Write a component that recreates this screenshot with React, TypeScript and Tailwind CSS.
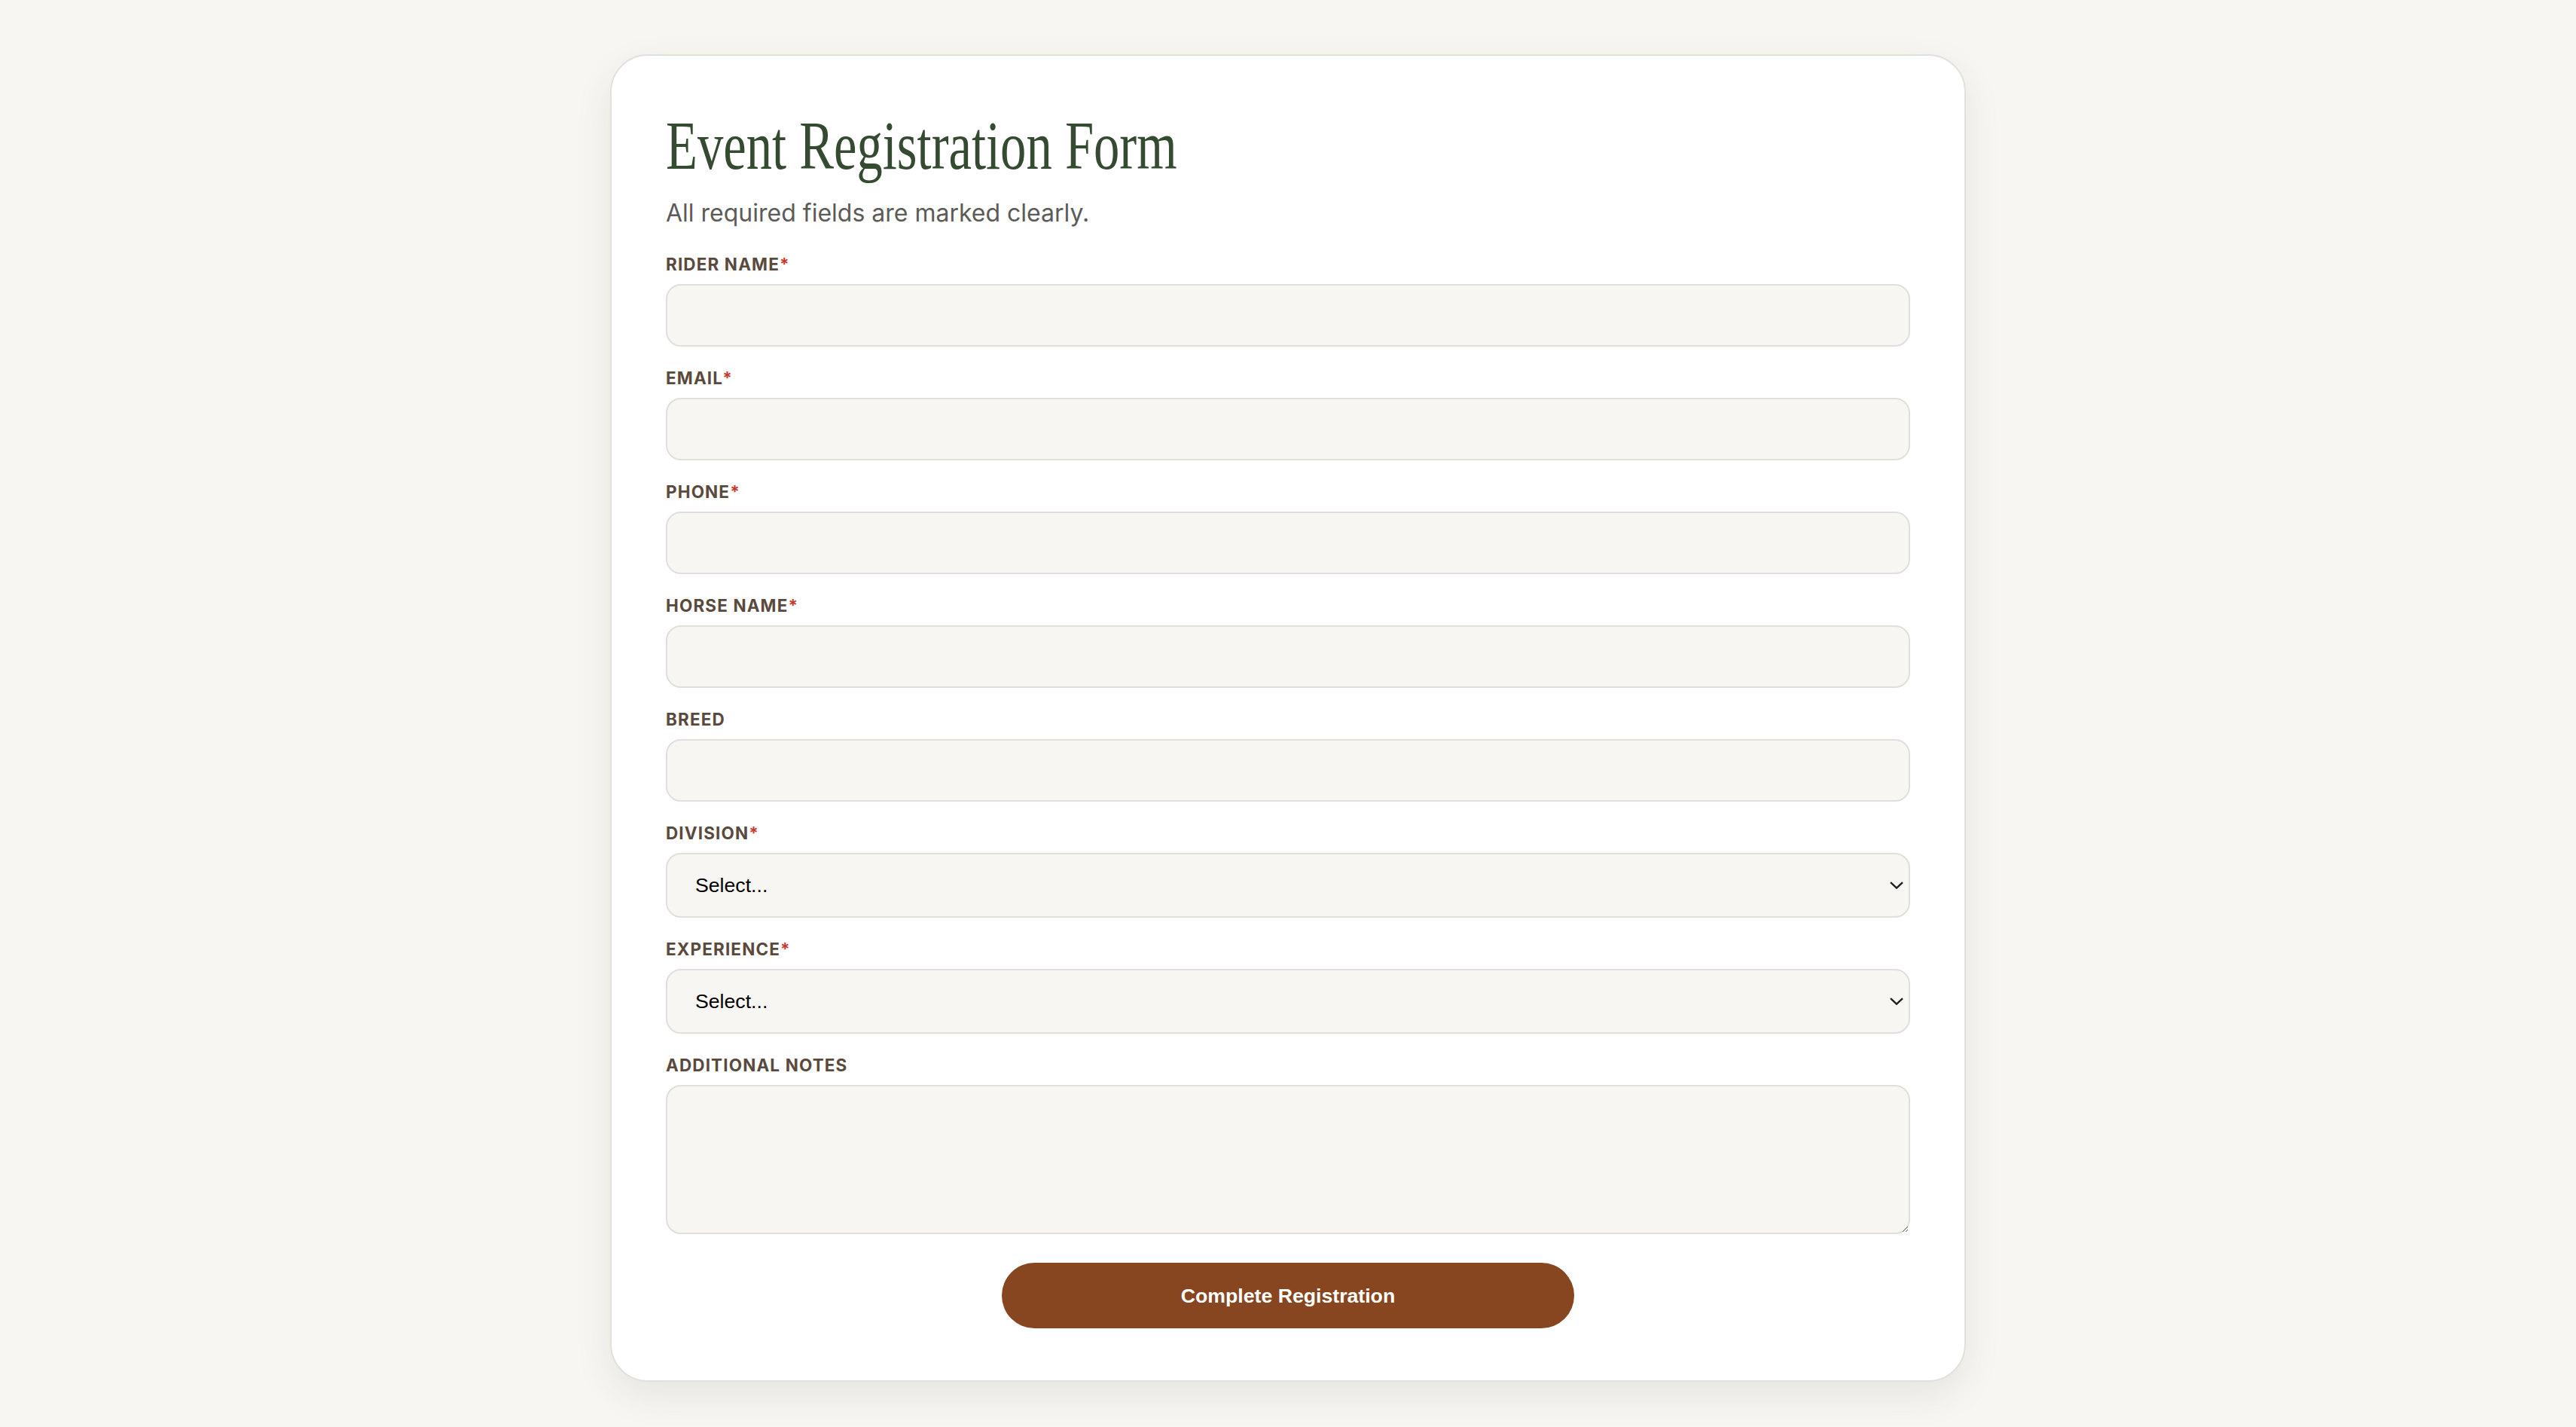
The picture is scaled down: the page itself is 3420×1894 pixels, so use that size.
import React from "react";

type Field = {
  label: string;
  required?: boolean;
  kind: "input" | "select" | "textarea";
};

const fields: Field[] = [
  { label: "Rider Name", required: true, kind: "input" },
  { label: "Email", required: true, kind: "input" },
  { label: "Phone", required: true, kind: "input" },
  { label: "Horse Name", required: true, kind: "input" },
  { label: "Breed", kind: "input" },
  { label: "Division", required: true, kind: "select" },
  { label: "Experience", required: true, kind: "select" },
  { label: "Additional Notes", kind: "textarea" },
];

function Chevron() {
  return (
    <svg
      width="18"
      height="10"
      viewBox="0 0 18 10"
      fill="none"
      className="pointer-events-none absolute right-[9px] top-1/2 -translate-y-1/2"
    >
      <path d="M1 1.2L9 8.6L17 1.2" stroke="#1f1f1f" strokeWidth="2.4" />
    </svg>
  );
}

function FormField({ field }: { field: Field }) {
  const box =
    "w-full rounded-[20px] border-2 border-[#e2dfda] bg-[#f7f6f2] outline-none";
  return (
    <div className="flex flex-col">
      <label className="mb-[13px] h-[26px] font-['Inter',sans-serif] text-[22.5px] leading-[26px] font-bold uppercase tracking-[0.05em] text-[#5a4a3d]">
        {field.label}
        {field.required && <span className="text-[#c8372d]">*</span>}
      </label>
      {field.kind === "input" && <input type="text" className={`${box} h-[83px] px-[36px]`} />}
      {field.kind === "select" && (
        <div className="relative">
          <select
            defaultValue=""
            className={`${box} h-[86px] appearance-none pl-[37px] font-['Liberation_Sans',Arial,sans-serif] text-[26.67px] text-black`}
          >
            <option value="">Select...</option>
          </select>
          <Chevron />
        </div>
      )}
      {field.kind === "textarea" && <textarea className={`${box} block h-[198px] resize-y px-[36px] py-[24px]`} />}
    </div>
  );
}

export default function App() {
  return (
    <div className="min-h-screen bg-[#f7f6f2] pt-[72px] pb-[60px]">
      <div className="mx-auto w-[1800px] rounded-[50px] border-2 border-[#e2e0db] bg-white px-[72px] pt-[69px] pb-[69px] shadow-[0_18px_50px_rgba(70,60,40,0.09)]">
        <h1 className="h-[101px] whitespace-nowrap font-['Liberation_Serif',serif] text-[92px] leading-[101px] font-normal text-[#344b31]">
          <span className="inline-block origin-left scale-x-[0.746]">Event Registration Form</span>
        </h1>
        <p className="mt-[15px] font-['Inter',sans-serif] text-[32px] leading-[48px] text-[#5d5b57]">
          All required fields are marked clearly.
        </p>
        <form className="mt-[31px] flex flex-col gap-[29px]">
          {fields.map((f) => (
            <FormField key={f.label} field={f} />
          ))}
        </form>
        <div className="mt-[38px] flex justify-center">
          <button
            type="button"
            className="h-[87px] w-[760px] rounded-full bg-[#87461f] font-['Liberation_Sans',Arial,sans-serif] text-[26.67px] font-bold text-white"
          >
            Complete Registration
          </button>
        </div>
      </div>
    </div>
  );
}
